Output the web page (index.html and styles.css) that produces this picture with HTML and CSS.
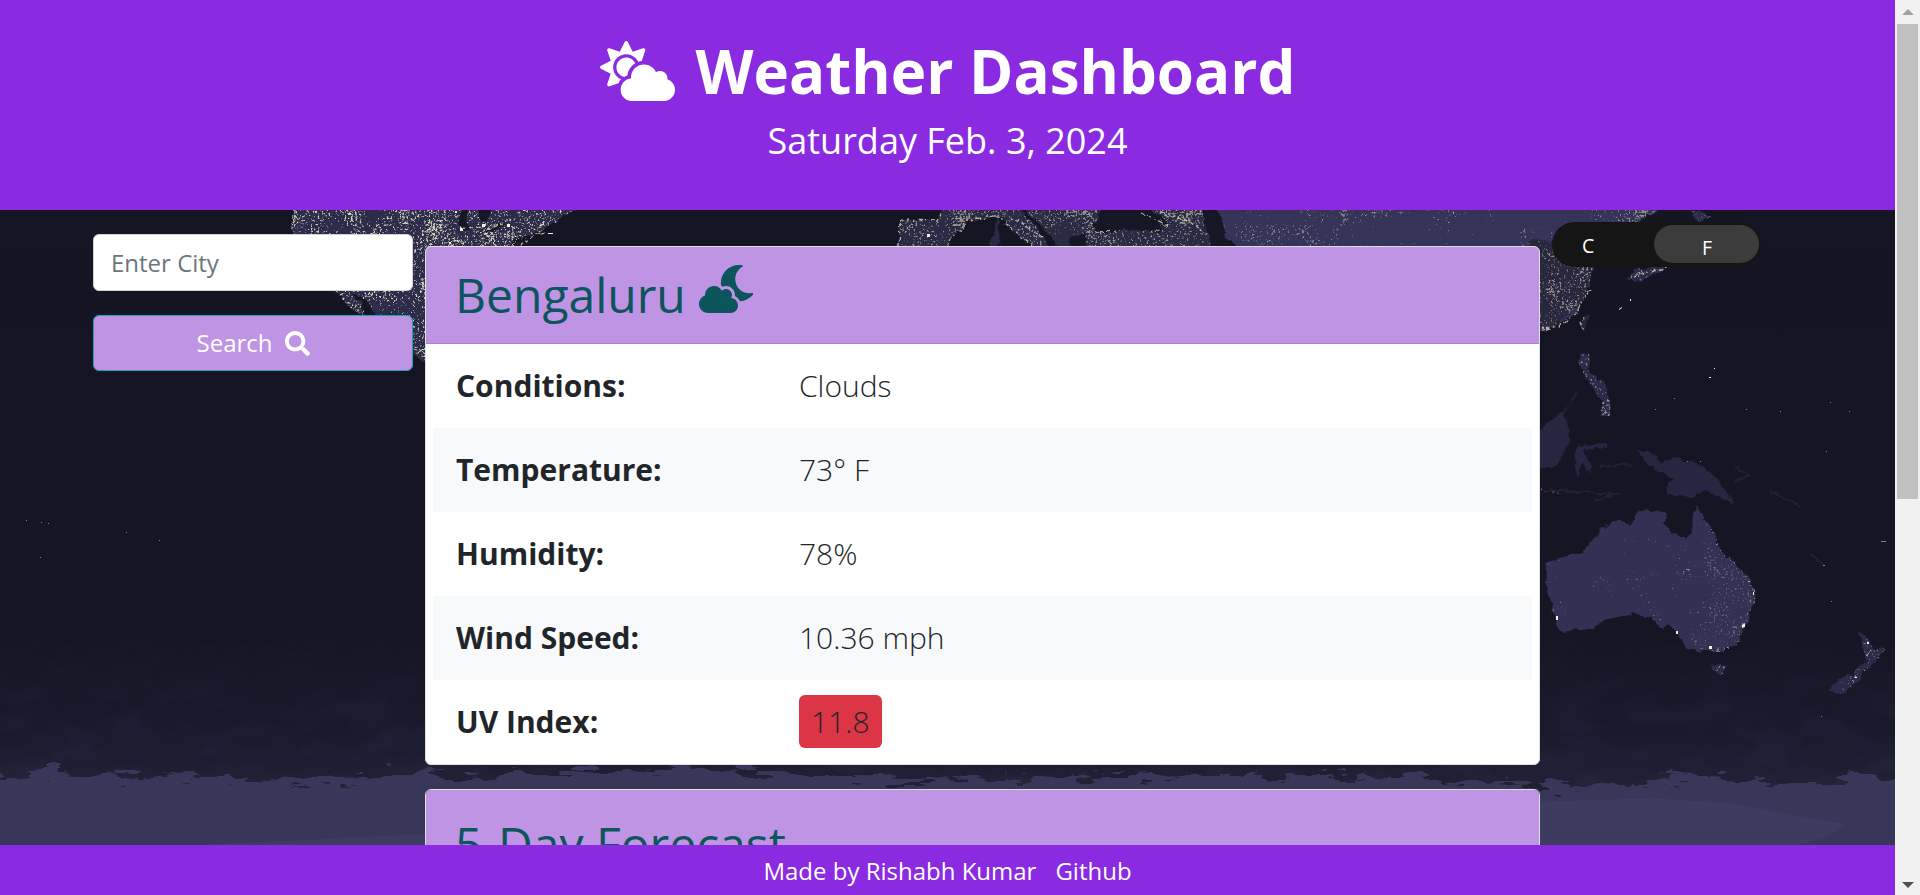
FILE: index.html
```html
<!DOCTYPE html>
<html lang="en">
<head>
<meta charset="utf-8">
<title>Weather Dashboard</title>
<link rel="stylesheet" href="styles.css">
</head>
<body>
<div class="app">
  <svg class="earth" viewBox="0 0 1895 895" aria-hidden="true">
    <defs>
      <filter id="dense" x="0" y="0" width="100%" height="100%" color-interpolation-filters="sRGB">
        <feTurbulence type="fractalNoise" baseFrequency="0.45" numOctaves="3" seed="4" result="fine"/>
        <feTurbulence type="fractalNoise" baseFrequency="0.04" numOctaves="2" seed="2" result="coarse"/>
        <feComposite in="fine" in2="coarse" operator="arithmetic" k2=".75" k3=".35"/>
        <feColorMatrix values="0 0 0 0 .84  0 0 0 0 .82  0 0 0 0 .72  8 0 0 0 -4.4" result="n"/>
        <feComposite in="n" in2="SourceGraphic" operator="in"/>
      </filter>
      <filter id="medium" x="0" y="0" width="100%" height="100%" color-interpolation-filters="sRGB">
        <feTurbulence type="fractalNoise" baseFrequency="0.42" numOctaves="3" seed="9" result="fine"/>
        <feTurbulence type="fractalNoise" baseFrequency="0.05" numOctaves="2" seed="6" result="coarse"/>
        <feComposite in="fine" in2="coarse" operator="arithmetic" k2=".75" k3=".35"/>
        <feColorMatrix values="0 0 0 0 .8  0 0 0 0 .79  0 0 0 0 .72  9 0 0 0 -5.3" result="n"/>
        <feComposite in="n" in2="SourceGraphic" operator="in"/>
      </filter>
      <filter id="sparse" x="0" y="0" width="100%" height="100%" color-interpolation-filters="sRGB">
        <feTurbulence type="fractalNoise" baseFrequency="0.42" numOctaves="2" seed="12" result="fine"/>
        <feTurbulence type="fractalNoise" baseFrequency="0.03" numOctaves="2" seed="8" result="coarse"/>
        <feComposite in="fine" in2="coarse" operator="arithmetic" k2=".75" k3=".35"/>
        <feColorMatrix values="0 0 0 0 .8  0 0 0 0 .8  0 0 0 0 .76  9 0 0 0 -6.3" result="n"/>
        <feComposite in="n" in2="SourceGraphic" operator="in"/>
      </filter>
      <filter id="rough" x="-2%" y="-2%" width="104%" height="104%" color-interpolation-filters="sRGB">
        <feTurbulence type="fractalNoise" baseFrequency="0.12" numOctaves="3" seed="3"/>
        <feDisplacementMap in="SourceGraphic" scale="7" xChannelSelector="R" yChannelSelector="G"/>
      </filter>
      <filter id="ice" x="-2%" y="-10%" width="104%" height="120%" color-interpolation-filters="sRGB">
        <feTurbulence type="fractalNoise" baseFrequency="0.03 0.12" numOctaves="4" seed="7"/>
        <feDisplacementMap in="SourceGraphic" scale="34" xChannelSelector="R" yChannelSelector="G"/>
      </filter>
      <filter id="haze" x="0" y="0" width="100%" height="100%" color-interpolation-filters="sRGB">
        <feTurbulence type="fractalNoise" baseFrequency="0.02 0.04" numOctaves="5" seed="5"/>
        <feColorMatrix values="0 0 0 0 .15  0 0 0 0 .15  0 0 0 0 .24  3 0 0 0 -1.2" result="n"/>
        <feComposite in="n" in2="SourceGraphic" operator="in"/>
      </filter>
      <linearGradient id="sea" x1="0" y1="0" x2="0" y2="1">
        <stop offset="0" stop-color="#171627"/>
        <stop offset=".3" stop-color="#151422"/>
        <stop offset=".7" stop-color="#161523"/>
        <stop offset=".82" stop-color="#1a1a2d"/>
        <stop offset=".87" stop-color="#202034"/>
      </linearGradient>
      <linearGradient id="fade" x1="0" y1="0" x2="0" y2="1">
        <stop offset="0" stop-color="#fff" stop-opacity="0"/>
        <stop offset="1" stop-color="#fff" stop-opacity=".6"/>
      </linearGradient>
      <path id="america" d="M294 206L291 225 298 250 312 272 335 290 348 306 366 318 362 306 352 292 368 302 378 322 400 345 425 362 440 362 440 300 500 250 520 238 540 232 553 222 570 212 590 206Z"/>
      <path id="europe" d="M895 252L899 240 899 221 920 219 938 221 943 206H1015L1035 225 1050 250H1034L1028 242 1012 230 1002 219 993 216 984 220 966 220 963 228 950 237 945 252ZM1022 206H1220V250H1062L1043 228Z"/>
      <path id="asia" d="M1206 206H1662L1650 214 1634 222 1612 236 1598 252 1588 258 1591 276 1585 298 1574 314 1558 324 1545 331H1530V260L1240 250 1222 232Z"/>
      <path id="australia" d="M1546 564L1552 560 1582 552 1592 540 1605 527 1616 520 1630 524 1638 510 1653 512 1668 513 1663 524 1670 531 1686 540 1692 532 1693 515 1697 504 1703 520 1711 525 1715 540 1722 552 1735 564 1746 575 1754 590 1755 600 1749 618 1742 630 1736 646 1720 651 1702 651 1686 648 1678 632 1668 624 1662 631 1652 618 1636 614 1612 618 1592 627 1564 633 1555 624 1552 604 1545 585Z"/>
      <path id="islands" d="M1690 210L1712 217 1698 222ZM1627 278L1640 268 1668 264 1662 270 1640 282 1633 281ZM1582 352L1590 354 1588 370 1596 378 1604 382 1610 402 1610 416 1600 416 1602 402 1592 386 1583 372 1579 364ZM1711 664L1726 666 1722 676 1712 668ZM1858 631L1870 640 1874 650 1886 648 1878 660 1864 672 1856 684 1840 694 1828 690 1836 682 1854 672 1866 660 1862 644Z"/>
      <path id="seas" d="M461 210H468L467 226 471 232 462 230 459 222ZM479 210H491L488 220 482 221ZM486 230L502 222 506 224 490 232ZM1095 224L1102 206H1147L1168 224 1158 233 1132 229 1108 233 1094 230ZM1201 206H1216L1222 224 1231 250H1212L1208 235ZM1071 236L1086 234 1087 248H1069Z"/>
    </defs>
    <rect width="1895" height="895" fill="url(#sea)"/>
    <rect y="640" width="1895" height="150" fill="url(#fade)" filter="url(#haze)"/>

    <g filter="url(#rough)">
      <use href="#america" fill="#2c2b4a"/>
      <use href="#europe" fill="#2b2a44"/>
      <use href="#asia" fill="#353458"/>
      <use href="#australia" fill="#323153"/>
      <path fill="#28273e" d="M1540 240L1598 250 1591 276 1585 298 1558 324 1530 331V240Z"/>
      <use href="#islands" fill="#2b2a49"/>
      <path fill="#2b2a45" d="M984 208L995 217 994 232 990 241 993 250 1000 242 998 222Z"/>
      <path fill="#272641" d="M1580 328L1584 316 1590 316 1584 332ZM1536 436L1552 418 1564 412 1570 430 1568 446 1556 468 1538 468ZM1576 446L1604 444 1606 448 1584 450 1592 466 1590 474 1582 462 1578 478 1575 466ZM1638 452L1652 452 1660 462 1674 457 1704 466 1720 482 1736 504 1722 499 1708 491 1688 498 1666 494 1672 478 1650 466Z"/>
      <path fill="none" stroke="#222138" stroke-width="2" d="M1540 490L1620 494M1595 502L1615 493M1564 412L1578 392M1734 465L1750 476 1736 482M1770 490L1800 506M1812 555L1824 566M1600 467L1632 464"/>
    </g>

    <use href="#america" fill="#fff" filter="url(#dense)"/>
    <path d="M390 206H586L500 254H440V362L425 300Z" fill="#fff" filter="url(#medium)"/>
    <use href="#europe" fill="#fff" filter="url(#dense)" opacity=".65"/>
    <use href="#asia" fill="#fff" filter="url(#sparse)" opacity=".7"/>
    <path d="M1520 228L1600 238 1591 276 1585 298 1558 324 1530 331ZM1590 210H1660L1620 232Z" fill="#fff" filter="url(#dense)" opacity=".6"/>
    <path d="M1190 222L1340 226V250H1270ZM1290 210H1430L1330 228Z" fill="#fff" filter="url(#medium)" opacity=".5"/>
    <use href="#australia" fill="#fff" filter="url(#sparse)" opacity=".6"/>
    <path d="M1700 540L1730 558 1754 590 1742 642 1700 651 1680 632 1710 620Z" fill="#fff" filter="url(#medium)" opacity=".35"/>
    <use href="#islands" fill="#fff" filter="url(#medium)" opacity=".65"/>
    <use href="#seas" fill="#171625" filter="url(#rough)"/>

    <g fill="none" stroke="#d3d0b8" stroke-width="1.4" stroke-dasharray="3 2 5 3 2 4" opacity=".8" filter="url(#rough)">
      <path d="M899 246L900 220 938 221 942 210M948 246L950 238 962 229 966 220 985 219 995 216 1013 229 1032 246M1004 214L1026 226 1043 238M1095 232L1120 231M1150 232L1168 226 1140 212M1160 213L1190 222 1208 236"/>
      <path d="M545 232L530 238 515 250 500 262M463 228L472 229M488 229L512 219M414 348L425 356M294 210L293 230"/>
      <path d="M1541 330L1560 326 1576 312 1590 290M1583 330L1580 321 1586 316M1634 276L1650 270 1668 268"/>
      <path stroke-width="1" stroke-dasharray="1 4 2 5" d="M1712 528L1720 550 1740 569 1753 588 1755 600 1742 626 1736 646M1712 651L1732 648M1540 489L1560 494"/>
    </g>
    <g fill="#f3f0dc">
      <path d="M455 211h2v2h-2ZM482 224h3v3h-3ZM548 233h5v1h-5ZM449 242h2v2h-2ZM507 224h3v3h-3ZM927 234h3v3h-3ZM460 226l3 3v2h-3ZM1619 309l3-2v1l-3 2ZM1709 377h2v1h-2ZM1714 368h1v1h-1ZM1630 299h1v2h-1ZM1742 625l3-2v4l-3 1ZM1753 592h1v3h-1ZM1709 646h3v3h-3ZM1676 631h2v3h-2ZM1556 616h2v4h-2ZM1867 642h2v2h-2ZM1855 677h2v1h-2Z"/>
      <path opacity=".5" d="M26 520h1v1h-1ZM41 522h1v1h-1ZM48 523h1v1h-1ZM126 532h1v1h-1ZM159 540h1v1h-1ZM40 557h1v1h-1ZM1831 601h1v1h-1ZM1821 716h1v1h-1ZM1700 461h1v1h-1ZM1687 461h1v1h-1ZM1830 402h1v1h-1ZM1849 411h1v1h-1ZM1780 411h1v1h-1ZM1746 409h1v1h-1ZM1674 398h1v1h-1ZM1826 451h1v1h-1ZM1655 409h1v1h-1ZM1881 541h5v1h-5ZM1823 565h2v1h-2Z"/>
    </g>

    <path fill="#393759" filter="url(#ice)" d="M-30 772L60 772 130 778 200 775 280 783 360 778 430 774 500 778 600 770 730 769 790 776 900 779 1200 776 1400 776 1540 784 1640 785 1670 776 1740 780 1840 786 1848 770 1930 780V920H-30Z"/>
    <path fill="#3d3b60" d="M1540 802L1650 798 1725 803 1845 824 1830 835 1800 845H1500ZM200 845L300 840 425 834V845Z"/>
  </svg>

  <header class="banner">
    <h1 class="banner-title">
      <svg class="icon-sun" viewBox="0 0 640 512" fill="currentColor"><path d="M575.2 325.7c.2-1.900.8-3.700.8-5.600 0-35.300-28.700-64-64-64-12.600 0-24.200 3.800-34.100 10-17.600-38.800-56.500-66-101.900-66-61.800 0-112 50.100-112 112 0 3 .7 5.800.9 8.700-49.600 3.700-88.900 44.700-88.900 95.300 0 53 43 96 96 96h272c53 0 96-43 96-96 0-42.100-27.200-77.400-64.800-90.400zm-430.400-22.600c-43.700-43.700-43.700-114.700 0-158.300 43.700-43.700 114.700-43.700 158.400 0 9.700 9.700 16.900 20.900 22.300 32.700 9.800-3.700 20.100-6 30.700-7.500L386 81.100c4-11.900-7.300-23.100-19.200-19.200L279 91.200 237.500 8.400C232-2.800 216-2.800 210.400 8.400L169 91.200 81.100 61.900C69.300 58 58 69.300 61.900 81.100l29.300 87.800-82.800 41.500c-11.200 5.600-11.200 21.500 0 27.100l82.800 41.400-29.300 87.800c-4 11.900 7.300 23.100 19.200 19.200l76.100-25.300c6.100-12.400 14-23.700 23.600-33.500-13.100-5.400-25.400-13.400-36-24zm-4.800-79.200c0 40.800 29.300 74.800 67.900 82.300 8-4.700 16.300-8.800 25.200-11.700 5.400-44.300 31-82.500 67.400-105C287.300 160.400 258 140 224 140c-46.300 0-84 37.600-84 83.900z"/></svg>
      <span>Weather Dashboard</span>
    </h1>
    <p class="banner-date">Saturday Feb. 3, 2024</p>
  </header>

  <main class="content">
    <form class="search">
      <input class="search-input" type="text" placeholder="Enter City">
      <button class="search-button" type="button">Search
        <svg class="icon-search" viewBox="0 0 512 512" fill="currentColor"><path d="M505 442.700L405.300 343c-4.500-4.500-10.600-7-17-7H372c27.600-35.300 44-79.700 44-128C416 93.100 322.900 0 208 0S0 93.100 0 208s93.100 208 208 208c48.300 0 92.700-16.400 128-44v16.300c0 6.400 2.500 12.500 7 17l99.700 99.700c9.400 9.400 24.600 9.400 33.900 0l28.300-28.300c9.400-9.400 9.400-24.600.1-34zM208 336c-70.700 0-128-57.200-128-128 0-70.700 57.200-128 128-128 70.700 0 128 57.200 128 128 0 70.700-57.200 128-128 128z"/></svg>
      </button>
    </form>

    <div class="cards">
      <section class="card">
        <h2 class="card-header">Bengaluru
          <svg class="icon-moon" viewBox="0 0 576 512" fill="currentColor"><path d="M342.800 352.700c5.700-9.600 9.200-20.700 9.200-32.700 0-35.300-28.700-64-64-64-17.200 0-32.800 6.900-44.300 17.900-16.300-29.600-47.500-49.900-83.700-49.900-53 0-96 43-96 96 0 2 .5 3.800.6 5.700C27.100 338.800 0 374.100 0 416c0 53 43 96 96 96h240c44.200 0 80-35.800 80-80 0-41.900-32.300-75.800-73.200-79.300zm222.500-54.300c-93.100 17.700-178.500-53.700-178.500-147.700 0-54.200 29-104 76.100-130.800 7.300-4.100 5.400-15.100-2.800-16.700C448.400 1.100 436.700 0 425 0 319.100 0 233.100 85.900 233.100 191.900c0 8.500.7 16.800 1.800 25 5.900 4.300 11.600 8.900 16.700 14.200 11.400-4.700 23.700-7.200 36.400-7.200 52.900 0 96 43.100 96 96 0 3.600-.2 7.200-.6 10.700 23.700 12.400 42.200 32.600 52.900 57.300 57.400-2.800 109.200-30.500 143.200-73.600 5.300-6.700-.6-17.100-9.100-15.600z"/></svg>
        </h2>
        <dl class="readings">
          <div class="reading"><dt>Conditions:</dt><dd>Clouds</dd></div>
          <div class="reading"><dt>Temperature:</dt><dd>73° F</dd></div>
          <div class="reading"><dt>Humidity:</dt><dd>78%</dd></div>
          <div class="reading"><dt>Wind Speed:</dt><dd>10.36 mph</dd></div>
          <div class="reading"><dt>UV Index:</dt><dd><span class="uv">11.8</span></dd></div>
        </dl>
      </section>
      <section class="card">
        <h2 class="card-header forecast-header">5-Day Forecast</h2>
      </section>
    </div>

    <div class="units">
      <span class="unit">C</span>
      <span class="unit unit-active">F</span>
    </div>
  </main>

  <footer class="footer"><span>Made by Rishabh Kumar</span><span>Github</span></footer>
</div>
<div class="scrollbar">
  <svg class="arrow" viewBox="0 0 12 6"><path d="M0 6L6 0 12 6Z" fill="#a3a3a3"/></svg>
  <div class="thumb"></div>
  <svg class="arrow arrow-down" viewBox="0 0 12 6"><path d="M0 0L6 6 12 0Z" fill="#505050"/></svg>
</div>
</body>
</html>
```

FILE: styles.css
```css
* { box-sizing: border-box; }

body {
  display: flex;
  height: 895px;
  margin: 0;
  overflow: hidden;
  font-family: "Open Sans", "Noto Sans", sans-serif;
  font-size: 24px;
  line-height: 1.5;
  color: #212529;
}

h1, h2, p, dl, dd { margin: 0; }

.app {
  position: relative;
  display: flex;
  flex-direction: column;
  width: 1895px;
  height: 895px;
  overflow: hidden;
}

.earth {
  position: absolute;
  inset: 0;
  width: 1895px;
  height: 895px;
}

.banner {
  position: relative;
  flex: none;
  height: 210px;
  padding-top: 35px;
  background: #8a2be2;
  color: #fff;
  text-align: center;
}

.banner-title {
  display: flex;
  justify-content: center;
  gap: 21px;
  font-size: 60px;
  font-weight: 700;
  line-height: 72px;
}

.icon-sun { width: 75px; height: 60px; margin-top: 6px; }

.banner-date {
  margin-top: 12px;
  font-size: 36px;
  line-height: 44px;
}

.content {
  position: relative;
  flex: 1;
  min-height: 0;
  display: flex;
  align-items: flex-start;
  padding-left: 93px;
  overflow: hidden;
}

.search {
  display: flex;
  flex-direction: column;
  gap: 24px;
  width: 320px;
  margin-top: 24px;
}

.search-input {
  height: 57px;
  padding: 0 17px;
  border: 1px solid #ced4da;
  border-radius: 6px;
  background: #fff;
  font: inherit;
}

.search-input::placeholder { color: #6c757d; opacity: 1; }

.search-button {
  display: flex;
  align-items: center;
  justify-content: center;
  gap: 12px;
  height: 56px;
  border: 1px solid #17a2b8;
  border-radius: 6px;
  background: #bf94e4;
  color: #fff;
  font: inherit;
}

.icon-search { width: 25px; height: 25px; }

.cards {
  display: flex;
  flex-direction: column;
  gap: 24px;
  width: 1115px;
  margin: 36px 0 0 12px;
}

.card {
  border: 1px solid #dfdfe3;
  border-radius: 6px;
  background: #fff;
  overflow: hidden;
}

.card-header {
  display: flex;
  gap: 13px;
  height: 97px;
  padding: 18px 29px;
  border-bottom: 1px solid #a981ca;
  background: #bf94e4;
  color: #0c555d;
  font-size: 48px;
  font-weight: 400;
  line-height: 60px;
}

.icon-moon { width: 54px; height: 48px; }

.forecast-header { padding-top: 24px; height: 110px; }

.readings { padding: 0 7px; }

.reading {
  display: grid;
  grid-template-columns: 343px 1fr;
  align-items: center;
  height: 84px;
  padding: 0 0 2px 23px;
  font-size: 30px;
}

.reading:nth-child(even) { background: #f8f9fa; }

dt { font-weight: 700; }

dd { font-weight: 300; }

.uv {
  display: inline-block;
  padding: 0 12px;
  border-radius: 6px;
  background: #dc3545;
  line-height: 53px;
}

.units {
  display: grid;
  grid-template-columns: 102px 105px;
  width: 209px;
  height: 45px;
  margin: 12px 0 0 12px;
  padding: 3px 0;
  border-radius: 23px;
  background: #151515;
  color: #fff;
  font-size: 19.5px;
  line-height: 42px;
}

.unit { padding-left: 30px; }

.unit-active {
  height: 38px;
  padding-left: 48px;
  border-radius: 19px;
  background: #3c3c3c;
  line-height: 45px;
}

.footer {
  position: relative;
  flex: none;
  display: flex;
  justify-content: center;
  gap: 19px;
  height: 50px;
  background: #8a2be2;
  color: #fff;
  line-height: 52px;
}

.scrollbar {
  display: flex;
  flex-direction: column;
  align-items: center;
  width: 25px;
  background: #f1f1f1;
}

.arrow { width: 12px; height: 6px; margin: 9px 0; }

.thumb { width: 21px; height: 475px; background: #c1c1c1; }

.arrow-down { margin-top: auto; margin-bottom: 7px; }
```
